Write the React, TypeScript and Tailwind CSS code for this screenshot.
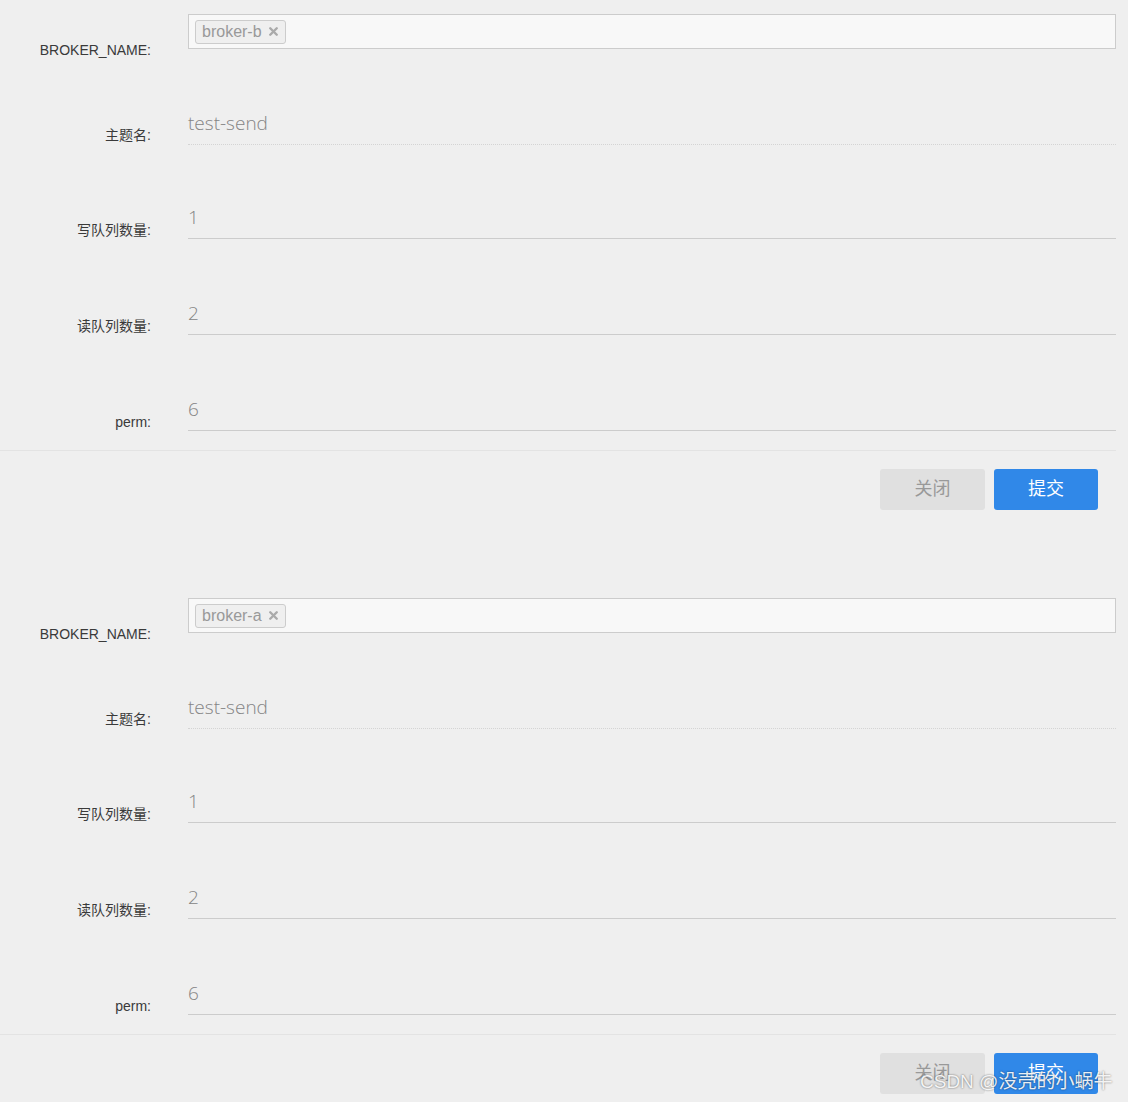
import { X } from "lucide-react";

type Field = { label: string; value: string; kind: "tag" | "disabled" | "line"; pad: string };

const sans = "font-['Liberation_Sans','Noto_Sans_CJK_SC',sans-serif]";

function TopicForm({ broker }: { broker: string }) {
  const fields: Field[] = [
    { label: "BROKER_NAME:", value: broker, kind: "tag", pad: "pt-[28px]" },
    { label: "主题名:", value: "test-send", kind: "disabled", pad: "pt-[17px]" },
    { label: "写队列数量:", value: "1", kind: "line", pad: "pt-[18px]" },
    { label: "读队列数量:", value: "2", kind: "line", pad: "pt-[18px]" },
    { label: "perm:", value: "6", kind: "line", pad: "pt-[18px]" },
  ];

  return (
    <div className="pt-[14px] pb-[74px]">
      <div className="flex flex-col gap-[61px] pr-[12px]">
        {fields.map((f, i) => (
          <div key={f.label} className={`flex h-[35px] items-start ${i === 2 ? "-mt-[2px]" : ""}`}>
            <div className={`w-[151px] shrink-0 ${f.pad} text-right text-[14px] leading-[16px] text-[#3a3a3a] ${sans}`}>
              {f.label}
            </div>
            <div className="ml-[37px] flex-1">
              {f.kind === "tag" ? (
                <div className="flex h-[35px] items-center border border-[#ccc] bg-[#f8f8f8] px-[6px]">
                  <span className={`flex h-[24px] items-center gap-[5px] rounded-[3px] border border-[#ccc] bg-[#efefef] pl-[6px] pr-[5px] text-[16px] text-[#999] ${sans}`}>
                    {f.value}
                    <X size={13} strokeWidth={4.5} className="text-[#aaa]" />
                  </span>
                </div>
              ) : (
                <div
                  className={`h-[35px] pt-[1px] text-[19px] leading-[24px] font-light text-[#858585] font-['Open_Sans',sans-serif] border-b border-[#ccc] ${
                    f.kind === "disabled" ? "border-dotted border-[#d4d4d4]" : "border-solid"
                  }`}
                >
                  {f.value}
                </div>
              )}
            </div>
          </div>
        ))}
      </div>
      <div className="mt-[19px] mr-[12px] border-t border-[#e3e3e3] pt-[18px] pr-[18px]">
        <div className="flex justify-end gap-[9px]">
          <button className={`h-[41px] w-[105px] rounded-[3px] bg-[#e0e0e0] text-[18px] text-[#999] ${sans}`}>关闭</button>
          <button className={`h-[41px] w-[104px] rounded-[3px] bg-[#3088e8] text-[18px] text-white ${sans}`}>提交</button>
        </div>
      </div>
    </div>
  );
}

export default function App() {
  return (
    <div className="relative h-[1102px] w-[1128px] overflow-hidden bg-[#efefef]">
      <TopicForm broker="broker-b" />
      <TopicForm broker="broker-a" />
      <div
        className={`absolute left-[920px] top-[1070px] text-[19px] leading-[24px] text-white/90 [text-shadow:0_0_2px_rgba(0,0,0,0.6)] ${sans}`}
      >
        CSDN @没壳的小蜗牛
      </div>
    </div>
  );
}
